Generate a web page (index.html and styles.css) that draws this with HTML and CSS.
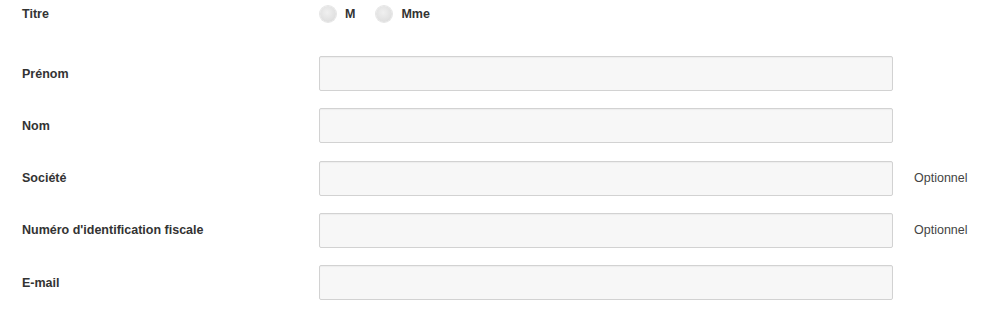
FILE: index.html
```html
<!DOCTYPE html>
<html lang="fr">
<head>
<meta charset="utf-8">
<link rel="stylesheet" href="styles.css">
</head>
<body>
<form class="form">
  <div class="row row-title">
    <span class="label">Titre</span>
    <div class="radios">
      <label class="radio"><span class="dot"></span><span class="radio-text">M</span></label>
      <label class="radio"><span class="dot"></span><span class="radio-text">Mme</span></label>
    </div>
  </div>
  <div class="row">
    <span class="label">Prénom</span>
    <span class="input"></span>
  </div>
  <div class="row">
    <span class="label">Nom</span>
    <span class="input"></span>
  </div>
  <div class="row">
    <span class="label">Société</span>
    <span class="input"></span>
    <span class="hint">Optionnel</span>
  </div>
  <div class="row">
    <span class="label">Numéro d'identification fiscale</span>
    <span class="input"></span>
    <span class="hint">Optionnel</span>
  </div>
  <div class="row">
    <span class="label">E-mail</span>
    <span class="input"></span>
  </div>
</form>
</body>
</html>
```

FILE: styles.css
```css
html, body {
  margin: 0;
  padding: 0;
  background: #ffffff;
}
body {
  font-family: "Liberation Sans", Arial, sans-serif;
  font-size: 12.5px;
  color: #333333;
}
.form {
  display: flex;
  flex-direction: column;
  padding: 0 0 0 22px;
  gap: 17.25px;
}
.row {
  display: flex;
  align-items: center;
  height: 35px;
}
.row-title {
  height: 27px;
  margin-bottom: 11.75px;
}
.label {
  width: 297px;
  flex: none;
  font-weight: bold;
  color: #333333;
}
.radios {
  display: flex;
  align-items: center;
  gap: 21px;
  padding-left: 1px;
}
.radio {
  display: flex;
  align-items: center;
  gap: 9px;
  font-weight: bold;
  color: #333333;
}
.dot {
  width: 16px;
  height: 16px;
  border-radius: 50%;
  background: radial-gradient(circle at 45% 40%, #f0f0f0 0%, #e3e3e3 55%, #d6d6d6 100%);
  box-shadow: 0 0 0 1px #e6e6e6;
}
.input {
  box-sizing: border-box;
  width: 574px;
  height: 35px;
  flex: none;
  background: #f7f7f7;
  border: 1px solid #d2d2d2;
  border-radius: 2px;
  box-shadow: inset 0 1px 1px rgba(0, 0, 0, 0.04);
}
.hint {
  margin-left: 21px;
  color: #444444;
}
```
